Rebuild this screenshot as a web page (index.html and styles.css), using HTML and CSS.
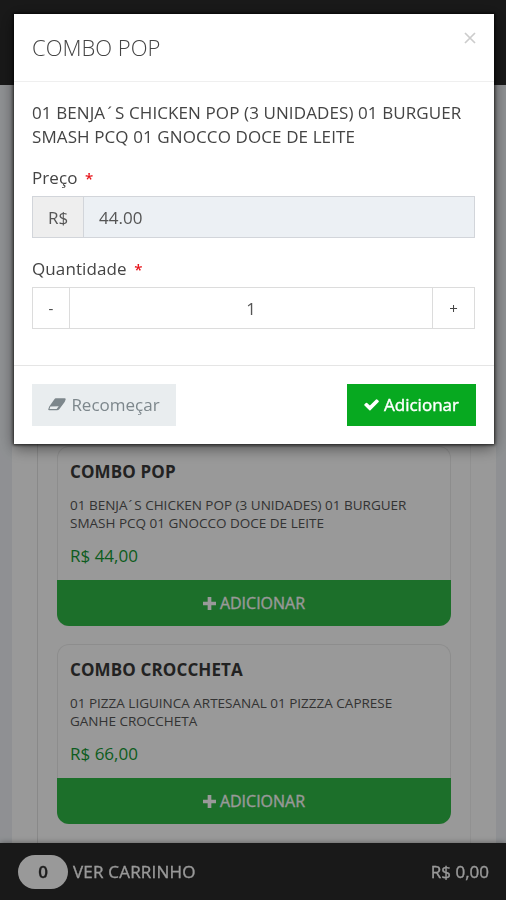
FILE: index.html
```
<!DOCTYPE html>
<html lang="pt-BR">
<head>
  <meta charset="UTF-8">
  <meta name="viewport" content="width=device-width, initial-scale=1.0">
  <title>Combo Pop</title>
  <link rel="stylesheet" href="styles.css">
</head>
<body>

  <header class="topo"></header>

  <main class="pagina">
    <div class="lista">
      <div class="produto">
        <div class="produto-info">
          <h3>COMBO POP</h3>
          <p class="desc">01 BENJA<span class="acento">´</span>S CHICKEN POP (3 UNIDADES) 01 BURGUER<br>SMASH PCQ 01 GNOCCO DOCE DE LEITE</p>
          <p class="preco">R$ 44,00</p>
        </div>
        <button class="btn-produto">
          <svg class="mais" viewBox="0 0 12 12"><path d="M4.3 0h3.4v4.3H12v3.4H7.7V12H4.3V7.7H0V4.3h4.3z"/></svg>
          <span>ADICIONAR</span>
        </button>
      </div>

      <div class="produto">
        <div class="produto-info">
          <h3>COMBO CROCCHETA</h3>
          <p class="desc">01 PIZZA LIGUINCA ARTESANAL 01 PIZZZA CAPRESE<br>GANHE CROCCHETA</p>
          <p class="preco">R$ 66,00</p>
        </div>
        <button class="btn-produto">
          <svg class="mais" viewBox="0 0 12 12"><path d="M4.3 0h3.4v4.3H12v3.4H7.7V12H4.3V7.7H0V4.3h4.3z"/></svg>
          <span>ADICIONAR</span>
        </button>
      </div>
    </div>
  </main>

  <footer class="carrinho">
    <span class="qtd">0</span>
    <span class="ver">VER CARRINHO</span>
    <span class="total">R$ 0,00</span>
  </footer>

  <div class="fundo"></div>

  <div class="modal">
    <div class="modal-header">
      <h4>COMBO POP</h4>
      <button class="fechar" aria-label="Fechar">
        <svg viewBox="0 0 12 12"><path d="M1 1l10 10M11 1L1 11"/></svg>
      </button>
    </div>

    <div class="modal-body">
      <p class="modal-desc">01 BENJA<span class="acento">´</span>S CHICKEN POP (3 UNIDADES) 01 BURGUER<br>SMASH PCQ 01 GNOCCO DOCE DE LEITE</p>

      <label>Preço <span class="obrigatorio">*</span></label>
      <div class="grupo grupo-preco">
        <span class="prefixo">R$</span>
        <span class="valor">44.00</span>
      </div>

      <label>Quantidade <span class="obrigatorio">*</span></label>
      <div class="grupo grupo-qtd">
        <button class="menos">-</button>
        <span class="numero">1</span>
        <button class="soma">+</button>
      </div>
    </div>

    <div class="modal-footer">
      <button class="btn btn-limpar">
        <svg class="borracha" viewBox="0 0 20 14"><path fill-rule="evenodd" d="M8.500 0h10q1.600 0 1 1.600l-1 2.600-6 8.200Q11.500 13.500 10 13.500H1.500Q-.2 13.500.4 11.900l1-2.600L7.300 1Q7.800 0 8.500 0zM2.600 9.300L1.700 12H9.600l2.300-3z"/></svg>
        <span>Recomeçar</span>
      </button>
      <button class="btn btn-adicionar">
        <svg class="certo" viewBox="0 0 15 12"><path d="M12 .4q.6-.5 1.200 0l1.400 1.400q.5.600 0 1.200L6.500 11.200q-.6.500-1.200 0L.5 6.500q-.5-.6 0-1.200l1.400-1.400q.6-.5 1.200 0L5.900 6.600z"/></svg>
        <span>Adicionar</span>
      </button>
    </div>
  </div>

</body>
</html>
```

FILE: styles.css
```
* {
  box-sizing: border-box;
}
body {
  margin: 0;
  height: 900px;
  overflow: hidden;
  background: #eef1f5;
  font-family: "Open Sans", "Liberation Sans", sans-serif;
  color: #444;
}
h3, h4, p {
  margin: 0;
}
button {
  font-family: inherit;
  padding: 0;
  border: none;
}
svg {
  display: block;
  fill: currentColor;
}
.topo {
  height: 85px;
  background: #2a2a2a;
}

/* lista de produtos */
.pagina {
  height: 815px;
  margin: 0 10px 0 12px;
  padding: 0 25px;
  background: #fff;
}
.lista {
  height: 100%;
  padding: 361px 18px 0;
  border-left: 1px solid #e4e4e4;
  border-right: 1px solid #f2f2f2;
}
.produto {
  height: 180px;
  margin: 0 1px 18px;
  display: flex;
  flex-direction: column;
  border: 1px solid #ececec;
  border-bottom: none;
  border-radius: 12px;
}
.produto-info {
  flex: 1;
  padding: 12px 12px 0;
}
.produto h3 {
  font-size: 17px;
  line-height: 26px;
  font-weight: 700;
  letter-spacing: .12px;
  color: #3a3a3a;
}
.acento {
  margin: 0 2px 0 1px;
}
.desc {
  margin-top: 11px;
  font-size: 13.5px;
  line-height: 18px;
  color: #555;
  white-space: nowrap;
}
.preco {
  margin-top: 12px;
  font-size: 17px;
  line-height: 24px;
  color: #159a34;
}
.btn-produto {
  height: 46px;
  margin: 0 -1px;
  display: flex;
  align-items: center;
  justify-content: center;
  gap: 4px;
  background: #30b946;
  color: #fff;
  border-radius: 0 0 12px 12px;
  font-size: 16px;
}
.btn-produto span, .carrinho {
  -webkit-text-stroke: .3px;
}
.mais {
  width: 13px;
  height: 13px;
}

/* barra do carrinho */
.carrinho {
  position: fixed;
  left: 0;
  right: 0;
  bottom: 0;
  height: 57px;
  padding: 0 17px 0 18px;
  display: flex;
  align-items: center;
  background: #2a2a2a;
  color: #fff;
  font-size: 17px;
  box-shadow: 0 0 6px rgba(0, 0, 0, .4);
}
.qtd {
  width: 50px;
  height: 34px;
  line-height: 34px;
  text-align: center;
  background: #fff;
  color: #333;
  border-radius: 17px;
  font-weight: 600;
}
.ver {
  margin-left: 5px;
  letter-spacing: .2px;
}
.total {
  margin-left: auto;
}
.fundo {
  position: fixed;
  inset: 0;
  background: rgba(0, 0, 0, .4);
}

/* modal */
.modal {
  position: fixed;
  top: 14px;
  left: 14px;
  width: 480px;
  height: 430px;
  display: flex;
  flex-direction: column;
  background: #fff;
  box-shadow: 0 0 3px 1px rgba(0, 0, 0, .75), 0 4px 14px rgba(0, 0, 0, .5);
}
.modal-header {
  height: 68px;
  padding: 0 18px;
  display: flex;
  justify-content: space-between;
  border-bottom: 1px solid #efefef;
}
.modal h4 {
  font-size: 22px;
  font-weight: 300;
  line-height: 67px;
}
.fechar {
  width: 12px;
  height: 12px;
  margin-top: 18px;
  background: none;
}
.fechar svg {
  width: 12px;
  height: 12px;
  fill: none;
  stroke: #ccc;
  stroke-width: 1.7;
}
.modal-body {
  flex: 1;
  padding: 19px 19px 0 18px;
}
.modal-desc {
  font-size: 17px;
  line-height: 24px;
  letter-spacing: .1px;
  white-space: nowrap;
  margin-bottom: 17px;
}
.modal-desc .acento {
  margin: 0 3px 0 2px;
}
.modal label {
  display: block;
  height: 30px;
  font-size: 17px;
  line-height: 24px;
  letter-spacing: .1px;
}
.obrigatorio {
  margin-left: 3px;
  color: #e7131a;
  font-size: 15px;
  font-weight: 600;
}
.grupo {
  height: 42px;
  display: flex;
  align-items: stretch;
  border: 1px solid #d2d5da;
  font-size: 17px;
  line-height: 41px;
  color: #555;
}
.grupo-preco {
  margin-bottom: 19px;
}
.prefixo {
  width: 51px;
  text-align: center;
  background: #eee;
  border-right: 1px solid #d2d5da;
}
.valor {
  flex: 1;
  padding-left: 15px;
  background: #ecf0f4;
}
.grupo-qtd {
  border-color: #dcdcdc;
}
.grupo-qtd button {
  background: #fff;
  color: #444;
  font-size: 15px;
}
.menos {
  width: 36px;
}
.soma {
  width: 41px;
}
.numero {
  flex: 1;
  text-align: center;
  border-left: 1px solid #dcdcdc;
  border-right: 1px solid #dcdcdc;
}
.modal-footer {
  height: 79px;
  padding: 18px 18px 0;
  display: flex;
  justify-content: space-between;
  border-top: 1px solid #e5e5e5;
}
.btn {
  height: 42px;
  padding-bottom: 1px;
  display: flex;
  align-items: center;
  justify-content: center;
  font-size: 17px;
}
.btn-limpar {
  width: 144px;
  gap: 5px;
  background: #e9edef;
  color: #7d878c;
}
.borracha {
  width: 18px;
  height: 13px;
}
.btn-adicionar {
  width: 129px;
  gap: 5px;
  background: #07a920;
  color: #fff;
}
.btn-adicionar span {
  -webkit-text-stroke: .4px;
}
.certo {
  width: 15px;
  height: 12px;
}
```
